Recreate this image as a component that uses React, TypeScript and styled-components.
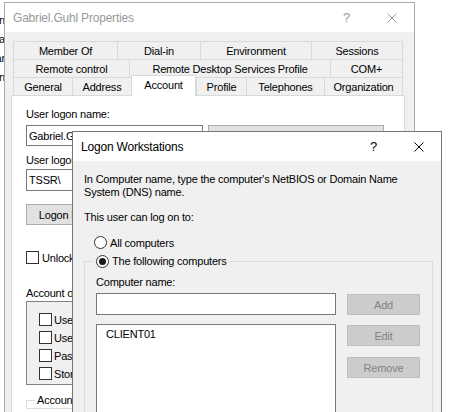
import React from "react";
import styled, { createGlobalStyle } from "styled-components";

const FONT = `"Liberation Sans", Arial, sans-serif`;

const GlobalStyle = createGlobalStyle`
  html, body { margin: 0; padding: 0; background: #fff; }
  body { font-family: ${FONT}; font-size: 11px; letter-spacing: -0.2px; color: #000; overflow: hidden; }
  * { box-sizing: border-box; }
`;

const Desktop = styled.div`
  position: relative;
  width: 458px;
  height: 412px;
  overflow: hidden;
  background: #fff;
`;

/* ---------- window behind everything ---------- */
const BackWindow = styled.div`
  position: absolute;
  left: -60px;
  top: -12px;
  width: 320px;
  display: flex;
  flex-direction: column;
  color: #000;
`;
const BackHeader = styled.div`
  display: flex;
  height: 14px;
  line-height: 14px;
`;
const BackHeaderCell = styled.span<{ $w: number }>`
  width: ${(p) => p.$w}px;
  white-space: nowrap;
`;
const BackList = styled.div`
  margin-top: 9px;
  width: 65px;
  display: flex;
  flex-direction: column;
`;
const BackLine = styled.div`
  height: 19px;
  line-height: 19px;
  text-align: right;
  white-space: nowrap;
`;

/* ---------- generic window chrome ---------- */
const Window = styled.div<{ $left: number; $top: number; $w: number; $h: number; $active?: boolean }>`
  position: absolute;
  left: ${(p) => p.$left}px;
  top: ${(p) => p.$top}px;
  width: ${(p) => p.$w}px;
  height: ${(p) => p.$h}px;
  border: 1px solid ${(p) => (p.$active ? "#777777" : "#aaaaaa")};
  background: #f0f0f0;
  display: flex;
  flex-direction: column;
`;
const TitleBar = styled.div<{ $active?: boolean }>`
  height: 29px;
  flex: none;
  background: #fff;
  display: flex;
  align-items: center;
  color: ${(p) => (p.$active ? "#000" : "#999")};
`;
const TitleText = styled.div`
  flex: 1;
  padding-left: 8px;
  font-size: 12px;
  white-space: nowrap;
`;
const CaptionButton = styled.div`
  width: 45px;
  height: 29px;
  display: flex;
  align-items: center;
  justify-content: center;
  font-size: 13px;
`;

const CloseIcon = ({ color }: { color: string }) => (
  <svg width="10" height="10" viewBox="0 0 10 10">
    <path d="M0.5 0.5 L9.5 9.5 M9.5 0.5 L0.5 9.5" stroke={color} strokeWidth="1" fill="none" />
  </svg>
);

/* ---------- properties window ---------- */
const PropBody = styled.div`
  flex: 1;
  display: flex;
  flex-direction: column;
  padding: 9px 9px 0 6px;
`;
const TabRow = styled.div`
  display: flex;
  height: 18px;
  margin: 0 2px;
`;
const Tab = styled.div<{ $w: number; $last?: boolean; $selected?: boolean }>`
  width: ${(p) => p.$w}px;
  flex: none;
  display: flex;
  align-items: center;
  justify-content: center;
  white-space: nowrap;
  border-top: 1px solid #d9d9d9;
  border-left: 1px solid #d9d9d9;
  border-right: ${(p) => (p.$last || p.$selected ? "1px solid #d9d9d9" : "none")};
  background: ${(p) => (p.$selected ? "#fff" : "#f0f0f0")};
  ${(p) =>
    p.$selected
      ? `
    align-self: flex-end;
    height: 21px;
    margin-bottom: -1px;
    position: relative;
    z-index: 2;
    padding-bottom: 3px;
  `
      : ""}
`;
const Panel = styled.div`
  flex: 1;
  background: #fff;
  border: 1px solid #d9d9d9;
  padding: 11px 0 0 14px;
  display: flex;
  flex-direction: column;
`;
const Label = styled.div<{ $mt?: number }>`
  height: 15px;
  line-height: 15px;
  margin-top: ${(p) => p.$mt ?? 0}px;
  white-space: nowrap;
`;
const FieldRow = styled.div<{ $mt: number }>`
  display: flex;
  gap: 5px;
  margin-top: ${(p) => p.$mt}px;
`;
const TextBox = styled.div<{ $w: number; $h: number; $gray?: boolean }>`
  width: ${(p) => p.$w}px;
  height: ${(p) => p.$h}px;
  border: 1px solid ${(p) => (p.$gray ? "#adadad" : "#7a7a7a")};
  background: ${(p) => (p.$gray ? "#e1e1e1" : "#fff")};
  padding-left: 2px;
  display: flex;
  align-items: center;
  white-space: nowrap;
  overflow: hidden;
`;
const PushButton = styled.div<{ $w: number }>`
  width: ${(p) => p.$w}px;
  height: 21px;
  border: 1px solid #adadad;
  background: #e1e1e1;
  display: flex;
  align-items: center;
  justify-content: center;
  white-space: nowrap;
`;
const CheckRow = styled.div<{ $mt?: number; $gap: number }>`
  display: flex;
  align-items: center;
  gap: ${(p) => p.$gap}px;
  height: 13px;
  margin-top: ${(p) => p.$mt ?? 0}px;
  white-space: nowrap;
`;
const CheckBox = styled.span`
  width: 13px;
  height: 13px;
  flex: none;
  border: 1px solid #333;
  background: #fff;
`;
const OptionsList = styled.div`
  width: 357px;
  height: 84px;
  border: 1px solid #828282;
  background: #f0f0f0;
  padding: 11px 0 0 12px;
  display: flex;
  flex-direction: column;
  gap: 5px;
`;
const GroupBox = styled.fieldset<{ $w: number; $mt: number; $pl: number }>`
  width: ${(p) => p.$w}px;
  margin: ${(p) => p.$mt}px 0 0 0;
  padding: 0 0 0 ${(p) => p.$pl}px;
  border: 1px solid #dcdcdc;
  min-width: 0;
`;
const GroupLegend = styled.legend<{ $ml: number }>`
  padding: 0 2px;
  margin-left: ${(p) => p.$ml}px;
  height: 15px;
  line-height: 15px;
  white-space: nowrap;
`;

/* ---------- logon workstations dialog ---------- */
const DialogBody = styled.div`
  flex: 1;
  display: flex;
  flex-direction: column;
  padding: 12px 0 0 11px;
`;
const Paragraph = styled.div`
  line-height: 13px;
  width: 330px;
`;
const RadioRow = styled.div<{ $mt?: number; $pl?: number }>`
  display: flex;
  align-items: center;
  gap: 3px;
  height: 15px;
  margin-top: ${(p) => p.$mt ?? 0}px;
  padding-left: ${(p) => p.$pl ?? 0}px;
  white-space: nowrap;
`;
const RadioCircle = styled.span<{ $checked?: boolean }>`
  width: 13px;
  height: 13px;
  flex: none;
  border-radius: 50%;
  border: 1px solid #333;
  background: #fff;
  display: flex;
  align-items: center;
  justify-content: center;
  &::after {
    content: "";
    display: ${(p) => (p.$checked ? "block" : "none")};
    width: 7px;
    height: 7px;
    border-radius: 50%;
    background: #1a1a1a;
  }
`;
const GroupInner = styled.div`
  padding-top: 6px;
  display: flex;
  flex-direction: column;
`;
const EntryArea = styled.div`
  display: flex;
  gap: 11px;
  margin-top: 3px;
`;
const LeftCol = styled.div`
  display: flex;
  flex-direction: column;
  gap: 9px;
`;
const ListBox = styled.div`
  width: 240px;
  height: 120px;
  border: 1px solid #7a7a7a;
  background: #fff;
  padding: 2px 0 0 9px;
  line-height: 15px;
`;
const ButtonCol = styled.div`
  display: flex;
  flex-direction: column;
  padding-top: 1px;
`;
const DisabledButton = styled.div<{ $mt?: number }>`
  width: 73px;
  height: 21px;
  margin-top: ${(p) => p.$mt ?? 0}px;
  border: 1px solid #bfbfbf;
  background: #cccccc;
  color: #838383;
  display: flex;
  align-items: center;
  justify-content: center;
`;

export default function App() {
  return (
    <Desktop>
      <GlobalStyle />
      <BackWindow>
        <BackHeader>
          <BackHeaderCell $w={247}>Kristof Osteen</BackHeaderCell>
          <BackHeaderCell $w={60}>User</BackHeaderCell>
        </BackHeader>
        <BackList>
          <BackLine>Admin</BackLine>
          <BackLine>Extra</BackLine>
          <BackLine>Par</BackLine>
          <BackLine>Domain</BackLine>
        </BackList>
      </BackWindow>

      <Window $left={4} $top={2} $w={411} $h={440}>
        <TitleBar>
          <TitleText>Gabriel.Guhl Properties</TitleText>
          <CaptionButton>?</CaptionButton>
          <CaptionButton>
            <CloseIcon color="#999" />
          </CaptionButton>
        </TitleBar>
        <PropBody>
          <TabRow>
            <Tab $w={104}>Member Of</Tab>
            <Tab $w={83}>Dial-in</Tab>
            <Tab $w={111}>Environment</Tab>
            <Tab $w={92} $last>Sessions</Tab>
          </TabRow>
          <TabRow>
            <Tab $w={116}>Remote control</Tab>
            <Tab $w={201}>Remote Desktop Services Profile</Tab>
            <Tab $w={73} $last>COM+</Tab>
          </TabRow>
          <TabRow>
            <Tab $w={59}>General</Tab>
            <Tab $w={59}>Address</Tab>
            <Tab $w={65} $selected>Account</Tab>
            <Tab $w={50}>Profile</Tab>
            <Tab $w={78}>Telephones</Tab>
            <Tab $w={79} $last>Organization</Tab>
          </TabRow>
          <Panel>
            <Label>User logon name:</Label>
            <FieldRow $mt={3}>
              <TextBox $w={177} $h={21}>Gabriel.Guhl</TextBox>
              <TextBox $w={176} $h={21} $gray>@tssr.lan</TextBox>
            </FieldRow>
            <Label $mt={7}>User logon name (pre-Windows 2000):</Label>
            <FieldRow $mt={1}>
              <TextBox $w={177} $h={22}>TSSR\</TextBox>
              <TextBox $w={176} $h={22}>Gabriel.Guhl</TextBox>
            </FieldRow>
            <FieldRow $mt={13}>
              <PushButton $w={95}>Logon Hours...</PushButton>
              <PushButton $w={95}>Log On To...</PushButton>
            </FieldRow>
            <CheckRow $mt={26} $gap={3}>
              <CheckBox />
              Unlock account
            </CheckRow>
            <Label $mt={22}>Account options:</Label>
            <OptionsList>
              <CheckRow $gap={2}>
                <CheckBox />
                User must change password at next logon
              </CheckRow>
              <CheckRow $gap={2}>
                <CheckBox />
                User cannot change password
              </CheckRow>
              <CheckRow $gap={2}>
                <CheckBox />
                Password never expires
              </CheckRow>
              <CheckRow $gap={2}>
                <CheckBox />
                Store password using reversible encryption
              </CheckRow>
            </OptionsList>
            <GroupBox $w={357} $mt={8} $pl={8}>
              <GroupLegend $ml={0}>Account expires</GroupLegend>
            </GroupBox>
          </Panel>
        </PropBody>
      </Window>

      <Window $left={72} $top={131} $w={370} $h={320} $active>
        <TitleBar $active>
          <TitleText>Logon Workstations</TitleText>
          <CaptionButton>?</CaptionButton>
          <CaptionButton>
            <CloseIcon color="#000" />
          </CaptionButton>
        </TitleBar>
        <DialogBody>
          <Paragraph>
            In Computer name, type the computer's NetBIOS or Domain Name System (DNS) name.
          </Paragraph>
          <Label $mt={11}>This user can log on to:</Label>
          <RadioRow $mt={10} $pl={10}>
            <RadioCircle />
            All computers
          </RadioRow>
          <GroupBox $w={349} $mt={4} $pl={11}>
            <GroupLegend $ml={-2}>
              <RadioRow>
                <RadioCircle $checked />
                The following computers
              </RadioRow>
            </GroupLegend>
            <GroupInner>
              <Label>Computer name:</Label>
              <EntryArea>
                <LeftCol>
                  <TextBox $w={240} $h={22} />
                  <ListBox>CLIENT01</ListBox>
                </LeftCol>
                <ButtonCol>
                  <DisabledButton>Add</DisabledButton>
                  <DisabledButton $mt={10}>Edit</DisabledButton>
                  <DisabledButton $mt={11}>Remove</DisabledButton>
                </ButtonCol>
              </EntryArea>
            </GroupInner>
          </GroupBox>
        </DialogBody>
      </Window>
    </Desktop>
  );
}
